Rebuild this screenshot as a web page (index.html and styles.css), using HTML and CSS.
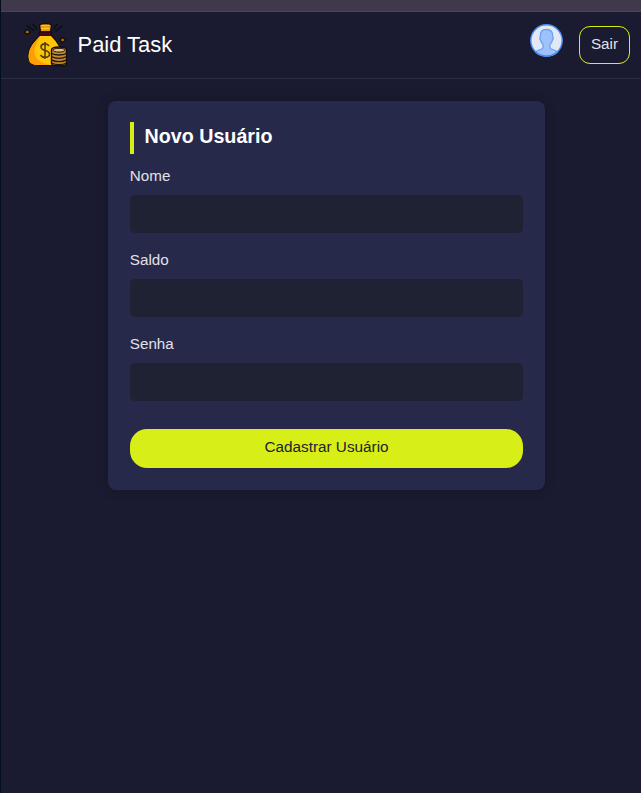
FILE: index.html
```html
<!DOCTYPE html>
<html lang="pt-BR">
<head>
<meta charset="utf-8">
<title>Paid Task</title>
<link rel="stylesheet" href="styles.css">
</head>
<body>
<div class="topstrip"></div>
<header class="header">
  <svg class="logo" viewBox="0 0 45 45" aria-hidden="true">
    <g fill="none" stroke="#0b0c14" stroke-width="1.4" stroke-linecap="round">
      <path d="M4 3.500l7 5M9.500 2l4.500 5M31 7l3-5M33 9l6-5"/>
    </g>
    <path d="M4.300 7.500l3 2.500-3 2.500-3-2.500zM39.700 15.500l3 2.500-3 2.500-3-2.500z" fill="#b56b08" stroke="#120d0e" stroke-width="1.400"/>
    <path d="M17 13C12 18 5 25 5 34c0 7 3 9.500 10 9.500h15c7 0 9-3 9-9.500 0-9-6-16-11-21z" fill="#ffc60a" stroke="#170d0c" stroke-width="1.200"/>
    <path d="M17 14.500C12.500 19 5.600 26 5.600 34c0 6.500 2.900 8.900 9.400 8.900h14C18 42 12 37 11.500 31 11 24 15 20 17 14.500z" fill="#ff9d05"/>
    <path d="M16.500 3c3-2 9-2 12 0l-1 7h-10z" fill="#e69a08" stroke="#160c0b" stroke-width="1.300"/>
    <path d="M18.500 3.200c3 .8 5 .8 8 0M18.500 6.500h8" fill="none" stroke="#ffcf2b" stroke-width="1"/>
    <path d="M16.500 10h12v3.300h-12z" fill="#4b0922" stroke="#19070f"/>
    <path d="M26 24c-1.500-3-8-3-8 1 0 4.500 8.500 2.500 8.500 7 0 4-7 4.500-9 1M22 20v17" fill="none" stroke="#54400a" stroke-width="1.600"/>
    <path d="M28.500 28c0-4 15-4 15 0v13.500c0 3-15 3-15 0z" fill="#c58a2c" stroke="#150e10" stroke-width="1.400"/>
    <ellipse cx="36" cy="28.200" rx="6" ry="1.900" fill="#dfc083" stroke="#21150f"/>
    <path d="M29 31.500c3 2 11 2 14 0M29 34.800c3 2 11 2 14 0M29 38.100c3 2 11 2 14 0M29 41.200c3 1.800 11 1.800 14 0" fill="none" stroke="#21150f" stroke-width="1.300"/>
  </svg>
  <span class="brand">Paid Task</span>
  <svg class="avatar" viewBox="0 0 33 33" aria-hidden="true">
    <circle cx="16.500" cy="16.500" r="15.800" fill="#e2e8f5"/>
    <path d="M5.500 28c1.500-1.800 5-2.200 6.700-3.300 1.300-1 1.300-2.700.6-4.700-1.300-1-2-2.500-2.300-4.200-1-.8-1-2.500-.2-3C10 8 12 5.300 16.500 5.300S23 8 22.700 12.800c.8.500.8 2.200-.2 3-.3 1.700-1 3.200-2.300 4.200-.7 2-.7 3.700.6 4.700 1.700 1.100 5.200 1.500 6.700 3.300-6 5.600-16 5.600-22 0z" fill="#a0c2fb" stroke="#659ff5" stroke-width="1.200"/>
    <circle cx="16.500" cy="16.500" r="15.700" fill="none" stroke="#468cf3" stroke-width="1.400"/>
  </svg>
  <button class="logout">Sair</button>
</header>
<main>
  <form class="card">
    <h1>Novo Usuário</h1>
    <label for="nome">Nome</label>
    <input id="nome" type="text">
    <label for="saldo">Saldo</label>
    <input id="saldo" type="text">
    <label for="senha">Senha</label>
    <input id="senha" type="password">
    <button class="submit" type="button">Cadastrar Usuário</button>
  </form>
</main>
</body>
</html>
```
FILE: styles.css
```css
* { box-sizing: border-box; }
body {
  margin: 0;
  min-height: 793px;
  background: #1a1b30;
  border-left: 1px solid #02101d;
  color: #e1e1e6;
  font: 15.200px/22px "Liberation Sans", Arial, sans-serif;
}
.topstrip { height: 12px; background: #40394c; border-bottom: 1px solid #4a4852; }
.header {
  display: flex;
  height: 67px;
  padding: 10px 11px 0 22px;
  border-bottom: 1px solid #2c2e43;
}
.logo { width: 45px; height: 45px; }
.brand { margin-left: 9.600px; color: #fff; font-size: 21.900px; line-height: 46px; }
.avatar { width: 33px; height: 33px; margin: 2px 16px 0 auto; }
button { font: inherit; padding: 0; }
.logout {
  width: 51px;
  height: 38px;
  margin-top: 4px;
  border: 1px solid #d7ef17;
  border-radius: 11px;
  background: transparent;
  color: #e1e1e6;
  padding-bottom: 2px;
}
.card {
  width: 437px;
  height: 389px;
  margin: 22px 0 0 107px;
  padding: 21px 22px;
  border-radius: 8px;
  background: #27294b;
  box-shadow: 0 0 11px rgba(0, 0, 0, .25);
}
h1 {
  height: 32px;
  margin: 0 0 11px;
  padding-left: 10.500px;
  border-left: 4px solid #d7ef17;
  color: #fff;
  font-size: 19.700px;
  line-height: 29px;
}
label { display: block; height: 30px; margin-left: -.2px; line-height: 22px; }
input {
  display: block;
  width: 100%;
  height: 38px;
  margin: 0 0 16px;
  padding: 0 11px;
  border: 0;
  border-radius: 5px;
  background: #1f2233;
  color: inherit;
  font: inherit;
}
.submit {
  display: block;
  width: 100%;
  height: 39px;
  margin-top: 28px;
  padding-bottom: 4px;
  border: 0;
  border-radius: 17px;
  background: #d7ef17;
  color: #1f2133;
  font-size: 15.300px;
}
```
